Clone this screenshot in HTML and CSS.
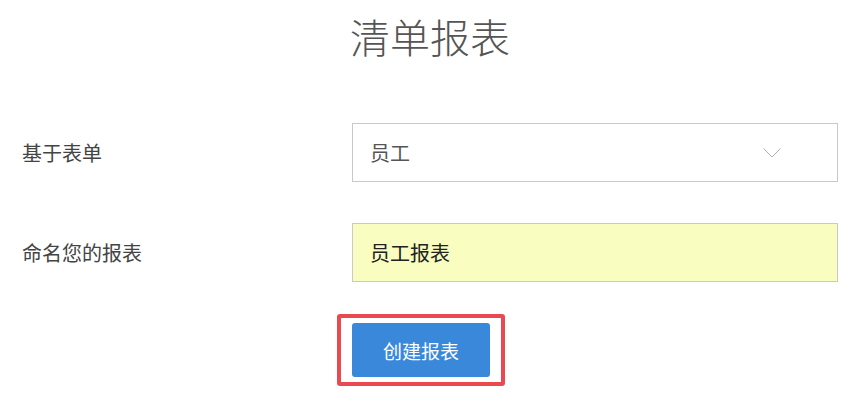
FILE: index.html
```html
<!DOCTYPE html>
<html lang="zh-CN">
<head>
<meta charset="utf-8">
<title>清单报表</title>
<link rel="stylesheet" href="styles.css">
</head>
<body>
<div class="page">
  <h1 class="title">清单报表</h1>
  <div class="form">
    <div class="row">
      <div class="label">基于表单</div>
      <div class="field select">
        <span class="value">员工</span>
        <svg class="chevron" width="18" height="10" viewBox="0 0 18 10"><polyline points="0.5,0.5 9,9 17.5,0.5" fill="none" stroke="#b0b0b0" stroke-width="1"/></svg>
      </div>
    </div>
    <div class="row">
      <div class="label">命名您的报表</div>
      <div class="field input"><span class="value">员工报表</span></div>
    </div>
    <div class="row">
      <div class="label"></div>
      <div class="actions"><div class="highlight"><button class="btn">创建报表</button></div></div>
    </div>
  </div>
</div>
</body>
</html>
```
FILE: styles.css
```css
html, body {
  margin: 0;
  background: #fff;
}
body {
  font-family: "Noto Sans CJK SC", "Noto Sans", sans-serif;
}
.page {
  padding: 6px 29px 24px 22px;
}
.title {
  margin: 0;
  text-align: center;
  font-size: 40px;
  line-height: 60px;
  font-weight: 300;
  color: #555;
}
.form {
  margin-top: 57px;
  display: flex;
  flex-direction: column;
  gap: 41px;
}
.row {
  display: grid;
  grid-template-columns: 330px 1fr;
  align-items: center;
}
.label {
  font-size: 20px;
  color: #444;
}
.field {
  box-sizing: border-box;
  height: 59px;
  border: 1px solid #c9c9c9;
  display: flex;
  align-items: center;
  padding: 0 56px 0 17px;
  font-size: 20px;
}
.select {
  justify-content: space-between;
  background: #fff;
  color: #555;
}
.input {
  background: #f9fdbf;
  color: #222;
}
.chevron {
  display: block;
}
.actions {
  display: flex;
}
.highlight {
  position: relative;
  display: flex;
}
.highlight::after {
  content: "";
  position: absolute;
  top: -9px;
  bottom: -9px;
  left: -15px;
  right: -15px;
  border: 4px solid #ea4a4f;
  border-radius: 3px;
  pointer-events: none;
}
.btn {
  width: 138px;
  height: 54px;
  border: none;
  border-radius: 3px;
  background: #3a88da;
  color: #fff;
  font-family: inherit;
  font-size: 19px;
  padding: 0;
}
```
